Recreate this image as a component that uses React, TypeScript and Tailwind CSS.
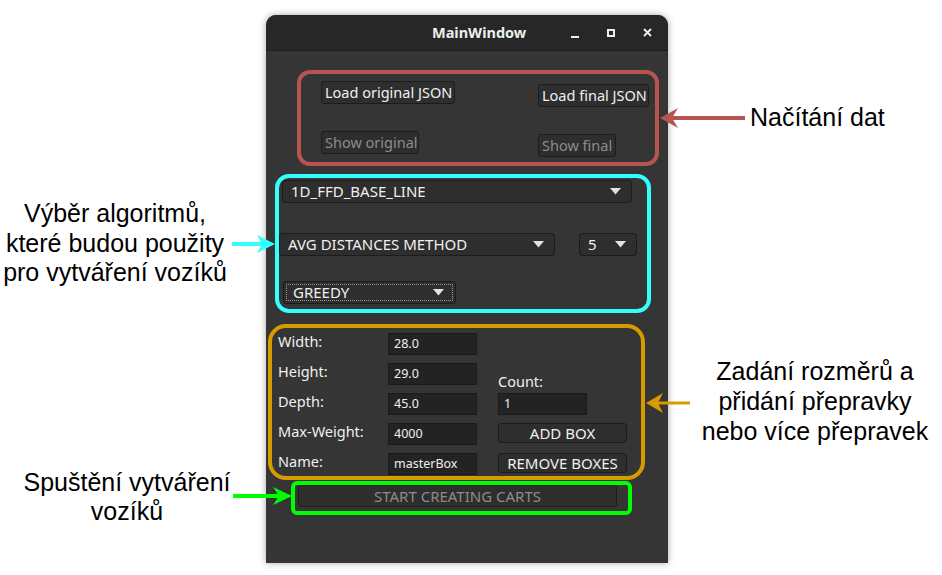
const ui = { fontFamily: '"Noto Sans", "Open Sans", sans-serif' };
const note = { fontFamily: '"Liberation Sans", Arial, sans-serif' };

function Caret() {
  return (
    <svg width="11" height="7" viewBox="0 0 11 7" className="shrink-0">
      <polygon points="0,0 11,0 5.5,6.5" fill="#e2e2e2" />
    </svg>
  );
}

function Button({ label, disabled, className }: { label: string; disabled?: boolean; className: string }) {
  return (
    <div
      className={`flex items-center rounded-[3px] border border-[#1c1c1c] bg-[#2e2e2e] ${
        disabled ? "text-[#8c8c8c]" : "text-[#f0f0f0]"
      } ${className}`}
    >
      {label}
    </div>
  );
}

function Combo({ label, className, focus }: { label: string; className: string; focus?: boolean }) {
  return (
    <div className={`flex items-center rounded-[3px] border border-[#1c1c1c] bg-[#2e2e2e] p-[2px] ${className}`}>
      <div
        className={`flex h-full w-full items-center justify-between pl-[6px] pr-[8px] text-[15px] text-[#f0f0f0] ${
          focus ? "border border-dotted border-[#9a9a9a]" : ""
        }`}
      >
        <span>{label}</span>
        <Caret />
      </div>
    </div>
  );
}

function Field({ value }: { value: string }) {
  return (
    <div className="flex h-[22px] w-[89px] items-end border border-[#1b1b1b] bg-[#232323] pb-[2px] pl-[5px] text-[12.5px] leading-[16px] text-[#f0f0f0]">
      {value}
    </div>
  );
}

const rows = [
  { label: "Width:", value: "28.0" },
  { label: "Height:", value: "29.0" },
  { label: "Depth:", value: "45.0" },
  { label: "Max-Weight:", value: "4000" },
  { label: "Name:", value: "masterBox" },
];

export default function App() {
  return (
    <div className="relative flex h-[575px] w-[942px] overflow-hidden bg-white text-black">
      {/* Left notes */}
      <div className="w-[266px] shrink-0 text-[25px] leading-[29.5px]" style={note}>
        <div className="mt-[199px] w-[230px] text-center">
          Výběr algoritmů,
          <br />
          které budou použity
          <br />
          pro vytváření vozíků
        </div>
        <div className="mt-[180px] w-[254px] text-center">
          Spuštění vytváření
          <br />
          vozíků
        </div>
      </div>

      {/* Window */}
      <div
        className="mt-[15px] flex h-[548px] w-[402px] shrink-0 flex-col overflow-hidden rounded-t-[10px] bg-[#353535] shadow-[0_0_7px_rgba(0,0,0,0.35)]"
        style={ui}
      >
        <div className="flex h-[36px] shrink-0 items-center border-b border-[#1d1d1d] bg-[#272727] text-[#eeeeee]">
          <span className="ml-[166px] text-[14.5px] font-bold">MainWindow</span>
          <div className="ml-auto mr-[3px] flex">
            <div className="flex h-[36px] w-[36px] items-center justify-center">
              <div className="mt-[8px] h-[2px] w-[8px] bg-[#eeeeee]" />
            </div>
            <div className="flex h-[36px] w-[36px] items-center justify-center">
              <div className="h-[8px] w-[8px] border-2 border-[#eeeeee]" />
            </div>
            <div className="flex h-[36px] w-[36px] items-center justify-center">
              <svg width="9" height="9" viewBox="0 0 9 9">
                <path d="M1 1L8 8M8 1L1 8" stroke="#eeeeee" strokeWidth="1.8" />
              </svg>
            </div>
          </div>
        </div>

        <div className="flex flex-col text-[14.5px]">
          {/* Loading */}
          <div className="ml-[31px] mt-[19px] flex h-[96px] w-[362px] rounded-[13px] border-4 border-[#b85450]">
            <div className="ml-[20px] flex w-[217px] flex-col">
              <Button label="Load original JSON" className="mt-[7px] h-[23px] w-[134px] pl-[3px]" />
              <Button label="Show original" disabled className="mt-[27px] h-[23px] w-[98px] pl-[3px]" />
            </div>
            <div className="flex flex-col">
              <Button label="Load final JSON" className="mt-[10px] h-[23px] w-[111px] pl-[3px]" />
              <Button label="Show final" disabled className="mt-[27px] h-[23px] w-[78px] pl-[3px]" />
            </div>
          </div>

          {/* Algorithms */}
          <div className="ml-[9px] mt-[8px] flex h-[139px] w-[376px] flex-col rounded-[14px] border-4 border-[#33ffff]">
            <Combo label="1D_FFD_BASE_LINE" className="ml-[3px] mt-[2px] h-[23px] w-[350px]" />
            <div className="mt-[30px] flex">
              <Combo label="AVG DISTANCES METHOD" className="h-[23px] w-[276px]" />
              <Combo label="5" className="ml-[24px] h-[23px] w-[58px]" />
            </div>
            <Combo label="GREEDY" focus className="ml-[4px] mt-[25px] h-[23px] w-[173px]" />
          </div>

          {/* Box params */}
          <div className="ml-[2px] mt-[11px] flex h-[156px] w-[377px] flex-col rounded-[18px] border-4 border-[#d79b00] pt-[5px] text-[#f0f0f0]">
            {rows.map((r, i) => (
              <div key={r.label} className="flex h-[30px] shrink-0">
                <div className="ml-[6px] w-[110px] leading-[16px]">{r.label}</div>
                <Field value={r.value} />
                <div className="ml-[21px]">
                  {i === 1 && <div className="pt-[10px] leading-[16px]">Count:</div>}
                  {i === 2 && <Field value="1" />}
                  {i === 3 && (
                    <Button label="ADD BOX" className="h-[20px] w-[129px] justify-center text-[15px]" />
                  )}
                  {i === 4 && (
                    <Button label="REMOVE BOXES" className="h-[20px] w-[129px] justify-center text-[15px]" />
                  )}
                </div>
              </div>
            ))}
          </div>

          {/* Start */}
          <div className="ml-[25px] mt-[1px] h-[34px] w-[341px] rounded-[6px] border-4 border-[#00ff00]">
            <Button
              label="START CREATING CARTS"
              disabled
              className="ml-[3px] h-[22px] w-[319px] justify-center text-[15px]"
            />
          </div>
        </div>
      </div>

      {/* Right notes */}
      <div className="flex-1 text-[25px] leading-[30px]" style={note}>
        <div className="ml-[82px] mt-[102px] whitespace-nowrap">Načítání dat</div>
        <div className="ml-[22px] mt-[224px] w-[250px] text-center">
          Zadání rozměrů a
          <br />
          přidání přepravky
          <br />
          nebo více přepravek
        </div>
      </div>

      {/* Arrows */}
      <svg className="pointer-events-none absolute inset-0" width="942" height="575" viewBox="0 0 942 575">
        <line x1="745" y1="118" x2="672" y2="118" stroke="#b85450" strokeWidth="4" />
        <polygon points="660,118 678,108 672,118 678,128" fill="#b85450" />
        <line x1="232" y1="244" x2="262" y2="244" stroke="#33ffff" strokeWidth="4" />
        <polygon points="275,244 257,235 262,244 257,253" fill="#33ffff" />
        <line x1="690" y1="403" x2="658" y2="403" stroke="#d79b00" strokeWidth="3" />
        <polygon points="646,403 663,393 658,403 663,413" fill="#d79b00" />
        <line x1="233" y1="496" x2="279" y2="496" stroke="#00ff00" strokeWidth="4" />
        <polygon points="292,496 273,487 279,496 273,505" fill="#00ff00" />
      </svg>
    </div>
  );
}
